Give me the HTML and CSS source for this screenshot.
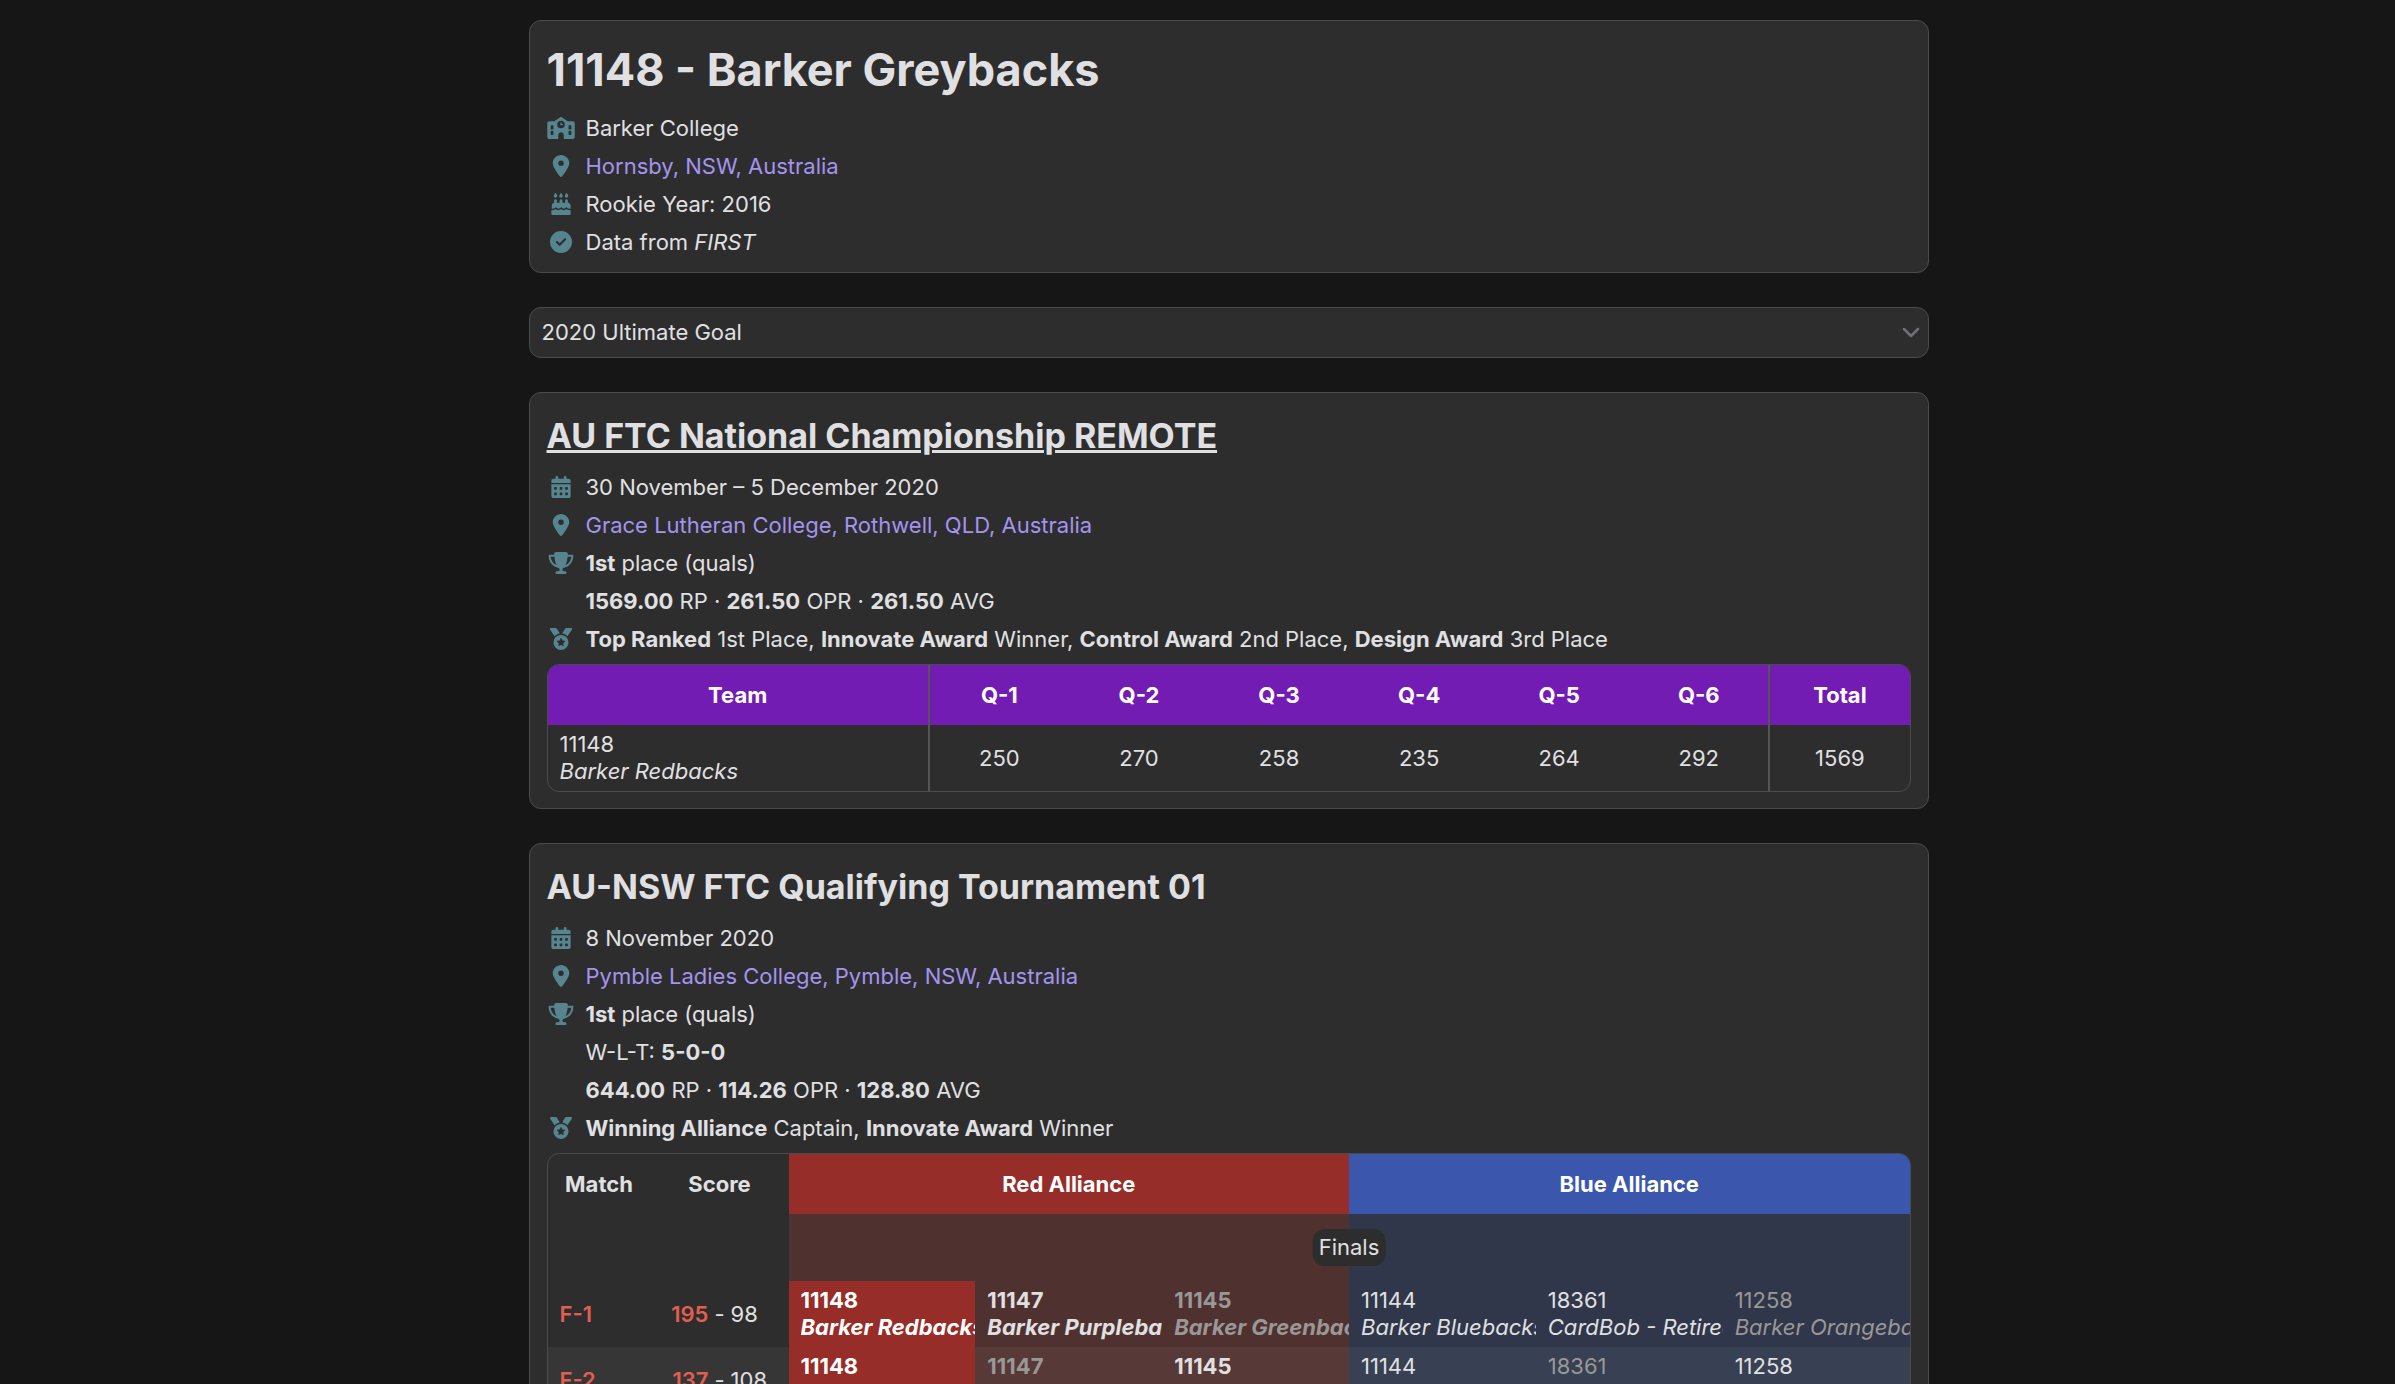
FILE: index.html
```html
<!DOCTYPE html>
<html lang="en">
<head>
    <meta charset="UTF-8">
    <meta name="viewport" content="width=device-width, initial-scale=1.0">
    <title>11148 - Barker Greybacks</title>
    <link rel="stylesheet" href="styles.css">
</head>
<body>
    <!-- Icon sprites -->
    <svg class="sprites" aria-hidden="true">
        <symbol id="school" viewBox="0 0 640 512"><path d="M337.8 5.4C327-1.8 313-1.8 302.2 5.4L166.3 96H48C21.5 96 0 117.5 0 144V464c0 26.5 21.5 48 48 48H256V416c0-35.3 28.7-64 64-64s64 28.7 64 64v96H592c26.5 0 48-21.5 48-48V144c0-26.5-21.5-48-48-48H473.7L337.8 5.4zM96 192h32c8.8 0 16 7.2 16 16v64c0 8.8-7.2 16-16 16H96c-8.8 0-16-7.2-16-16V208c0-8.8 7.2-16 16-16zm400 16c0-8.8 7.2-16 16-16h32c8.8 0 16 7.2 16 16v64c0 8.8-7.2 16-16 16H512c-8.8 0-16-7.2-16-16V208zM96 320h32c8.8 0 16 7.2 16 16v64c0 8.8-7.2 16-16 16H96c-8.8 0-16-7.2-16-16V336c0-8.8 7.2-16 16-16zm400 16c0-8.8 7.2-16 16-16h32c8.8 0 16 7.2 16 16v64c0 8.8-7.2 16-16 16H512c-8.8 0-16-7.2-16-16V336zM232 176a88 88 0 1 1 176 0 88 88 0 1 1 -176 0zm88-48c-8.8 0-16 7.2-16 16v32c0 8.8 7.2 16 16 16h32c8.8 0 16-7.2 16-16s-7.2-16-16-16H336V144c0-8.8-7.2-16-16-16z"/></symbol>
        <symbol id="location" viewBox="0 0 384 512"><path d="M215.7 499.2C267 435 384 279.4 384 192C384 86 298 0 192 0S0 86 0 192c0 87.4 117 243 168.3 307.2c12.3 15.3 35.1 15.3 47.4 0zM192 128a64 64 0 1 1 0 128 64 64 0 1 1 0-128z"/></symbol>
        <symbol id="cake" viewBox="0 0 448 512">
            <path d="M86.4 5.5L61.8 47.6C58 54.1 56 61.6 56 69.2V72c0 22.1 17.9 40 40 40s40-17.9 40-40V69.2c0-7.6-2-15-5.8-21.6L105.6 5.5C103.6 2.1 100 0 96 0s-7.6 2.1-9.6 5.5z"/>
            <path d="M214.4 5.5L189.8 47.6C186 54.1 184 61.6 184 69.2V72c0 22.1 17.9 40 40 40s40-17.9 40-40V69.2c0-7.6-2-15-5.8-21.6L233.6 5.5C231.6 2.1 228 0 224 0s-7.6 2.1-9.6 5.5z"/>
            <path d="M342.4 5.5L317.8 47.6C314 54.1 312 61.6 312 69.2V72c0 22.1 17.9 40 40 40s40-17.9 40-40V69.2c0-7.6-2-15-5.8-21.6L361.6 5.5C359.6 2.1 356 0 352 0s-7.6 2.1-9.6 5.5z"/>
            <path d="M64 224V176a32 32 0 0 1 64 0v48h64V176a32 32 0 0 1 64 0v48h64V176a32 32 0 0 1 64 0v48c35 0 64 29 64 64v71c-9 5-18 9-29 9c-25 0-45-14-55-28c-8-8-18-8-25 0c-10 14-30 28-51 28s-38-14-48-28c-8-8-18-8-24 0c-10 14-28 28-48 28s-41-14-51-28c-7-8-17-8-24 0c-11 14-31 28-55 28c-11 0-20-4-29-9V288c0-35 29-64 64-64z"/>
            <path d="M0 480V394c9 4 18 6 29 6c27 0 50-13 66-27c14 14 36 27 61 27s50-13 68-27c16 14 40 27 65 27s48-13 64-27c16 14 39 27 66 27c11 0 20-2 29-6v86a32 32 0 0 1-32 32H32a32 32 0 0 1-32-32z"/>
        </symbol>
        <symbol id="check" viewBox="0 0 512 512"><path d="M256 512A256 256 0 1 0 256 0a256 256 0 1 0 0 512zM369 209L241 337c-9.4 9.4-24.6 9.4-33.9 0l-64-64c-9.4-9.4-9.4-24.6 0-33.9s24.6-9.4 33.9 0l47 47L335 175c9.4-9.4 24.6-9.4 33.9 0s9.4 24.6 0 33.9z"/></symbol>
        <symbol id="calendar" viewBox="0 0 448 512"><path d="M128 0c17.7 0 32 14.3 32 32V64H288V32c0-17.7 14.3-32 32-32s32 14.3 32 32V64h48c26.5 0 48 21.5 48 48v48H0V112C0 85.5 21.5 64 48 64H96V32c0-17.7 14.3-32 32-32zM0 192H448V464c0 26.5-21.5 48-48 48H48c-26.5 0-48-21.5-48-48V192zm64 80v32c0 8.8 7.2 16 16 16h32c8.8 0 16-7.2 16-16V272c0-8.8-7.2-16-16-16H80c-8.8 0-16 7.2-16 16zm128 0v32c0 8.8 7.2 16 16 16h32c8.8 0 16-7.2 16-16V272c0-8.8-7.2-16-16-16H208c-8.8 0-16 7.2-16 16zm144-16c-8.8 0-16 7.2-16 16v32c0 8.8 7.2 16 16 16h32c8.8 0 16-7.2 16-16V272c0-8.8-7.2-16-16-16H336zM64 400v32c0 8.8 7.2 16 16 16h32c8.8 0 16-7.2 16-16V400c0-8.8-7.2-16-16-16H80c-8.8 0-16 7.2-16 16zm144-16c-8.8 0-16 7.2-16 16v32c0 8.8 7.2 16 16 16h32c8.8 0 16-7.2 16-16V400c0-8.8-7.2-16-16-16H208zm112 16v32c0 8.8 7.2 16 16 16h32c8.8 0 16-7.2 16-16V400c0-8.8-7.2-16-16-16H336c-8.8 0-16 7.2-16 16z"/></symbol>
        <symbol id="trophy" viewBox="0 0 576 512"><path d="M400 0H176c-26.5 0-48.1 21.8-47.1 48.2c.2 5.3 .4 10.6 .7 15.8H24C10.7 64 0 74.7 0 88c0 92.6 33.5 157 78.5 200.7c44.3 43.1 98.3 64.8 138.1 75.8c23.4 6.5 39.4 26 39.4 45.6c0 20.9-17 37.9-37.9 37.9H192c-17.7 0-32 14.3-32 32s14.3 32 32 32H384c17.7 0 32-14.3 32-32s-14.3-32-32-32H357.9C337 448 320 431 320 410.1c0-19.6 15.9-39.2 39.4-45.6c39.9-11 93.9-32.7 138.2-75.8C542.5 245 576 180.6 576 88c0-13.3-10.7-24-24-24H446.4c.3-5.2 .5-10.4 .7-15.8C448.1 21.8 426.5 0 400 0zM48.9 112h84.4c9.1 90.1 29.2 150.3 51.9 190.6c-24.9-11-50.8-26.5-73.2-48.3c-32-31.1-58-76-63-142.3zM464.1 254.3c-22.4 21.8-48.3 37.3-73.2 48.3c22.7-40.3 42.8-100.5 51.9-190.6h84.4c-5.1 66.3-31.1 111.2-63 142.3z"/></symbol>
        <symbol id="medal" viewBox="0 0 512 512"><path d="M4.1 38.2C1.4 34.2 0 29.4 0 24.6C0 11 11 0 24.6 0H133.9c11.2 0 21.7 5.9 27.4 15.5l68.5 114.1c-48.2 6.1-91.3 28.6-123.4 61.9L4.1 38.2zm503.7 0L405.6 191.5c-32.1-33.3-75.2-55.8-123.4-61.9L350.7 15.5C356.5 5.9 366.9 0 378.1 0H487.4C501 0 512 11 512 24.6c0 4.8-1.4 9.6-4.1 13.6zM80 336a176 176 0 1 1 352 0A176 176 0 1 1 80 336zm184.4-94.9c-3.4-7-13.3-7-16.8 0l-22.4 45.4c-1.4 2.8-4 4.7-7 5.1L168 298.9c-7.7 1.1-10.7 10.5-5.2 16l36.3 35.4c2.2 2.2 3.2 5.2 2.7 8.3l-8.6 49.9c-1.3 7.6 6.7 13.5 13.6 9.9l44.8-23.6c2.7-1.4 6-1.4 8.7 0l44.8 23.6c6.9 3.6 14.9-2.2 13.6-9.9l-8.6-49.9c-.5-3 .5-6.1 2.7-8.3l36.3-35.4c5.6-5.4 2.5-14.8-5.2-16l-50.1-7.3c-3-.4-5.7-2.4-7-5.1l-22.4-45.4z"/></symbol>
    </svg>

    <main class="page">
        <!-- Team info -->
        <section class="card">
            <h1>11148 - Barker Greybacks</h1>
            <div class="info"><svg class="icon"><use href="#school"/></svg><span>Barker College</span></div>
            <div class="info"><svg class="icon"><use href="#location"/></svg><a href="#">Hornsby, NSW, Australia</a></div>
            <div class="info"><svg class="icon"><use href="#cake"/></svg><span>Rookie Year: 2016</span></div>
            <div class="info"><svg class="icon"><use href="#check"/></svg><span>Data from <em>FIRST</em></span></div>
        </section>

        <div class="season">
            <select aria-label="Season">
                <option>2020 Ultimate Goal</option>
            </select>
            <svg class="chevron" viewBox="0 0 18 12"><path d="M2 2l7 7 7-7"/></svg>
        </div>

        <!-- Remote event -->
        <section class="card event">
            <h2><a href="#" class="hovered">AU FTC National Championship REMOTE</a></h2>
            <div class="info"><svg class="icon"><use href="#calendar"/></svg><span>30 November – 5 December 2020</span></div>
            <div class="info"><svg class="icon"><use href="#location"/></svg><a href="#">Grace Lutheran College, Rothwell, QLD, Australia</a></div>
            <div class="info"><svg class="icon"><use href="#trophy"/></svg><span><b>1st</b> place (quals)</span></div>
            <div class="info no-icon"><span><b>1569.00</b> RP · <b>261.50</b> OPR · <b>261.50</b> AVG</span></div>
            <div class="info"><svg class="icon"><use href="#medal"/></svg><span><b>Top Ranked</b> 1st Place, <b>Innovate Award</b> Winner, <b>Control Award</b> 2nd Place, <b>Design Award</b> 3rd Place</span></div>
            <div class="table-wrap">
                <table class="remote">
                    <thead>
                        <tr>
                            <th class="team-col">Team</th>
                            <th>Q-1</th>
                            <th>Q-2</th>
                            <th>Q-3</th>
                            <th>Q-4</th>
                            <th>Q-5</th>
                            <th>Q-6</th>
                            <th class="total">Total</th>
                        </tr>
                    </thead>
                    <tbody>
                        <tr>
                            <td class="team">11148<em>Barker Redbacks</em></td>
                            <td>250</td>
                            <td>270</td>
                            <td>258</td>
                            <td>235</td>
                            <td>264</td>
                            <td>292</td>
                            <td class="total">1569</td>
                        </tr>
                    </tbody>
                </table>
            </div>
        </section>

        <!-- Traditional event -->
        <section class="card event">
            <h2><a href="#">AU-NSW FTC Qualifying Tournament 01</a></h2>
            <div class="info"><svg class="icon"><use href="#calendar"/></svg><span>8 November 2020</span></div>
            <div class="info"><svg class="icon"><use href="#location"/></svg><a href="#">Pymble Ladies College, Pymble, NSW, Australia</a></div>
            <div class="info"><svg class="icon"><use href="#trophy"/></svg><span><b>1st</b> place (quals)</span></div>
            <div class="info no-icon"><span>W-L-T: <b>5-0-0</b></span></div>
            <div class="info no-icon"><span><b>644.00</b> RP · <b>114.26</b> OPR · <b>128.80</b> AVG</span></div>
            <div class="info"><svg class="icon"><use href="#medal"/></svg><span><b>Winning Alliance</b> Captain, <b>Innovate Award</b> Winner</span></div>
            <div class="table-wrap">
                <table class="matches">
                    <colgroup>
                        <col class="match-col">
                        <col class="score-col">
                        <col span="6">
                    </colgroup>
                    <thead>
                        <tr>
                            <th>Match</th>
                            <th>Score</th>
                            <th class="red" colspan="3">Red Alliance</th>
                            <th class="blue" colspan="3">Blue Alliance</th>
                        </tr>
                    </thead>
                    <tbody>
                        <tr class="level">
                            <td colspan="2"></td>
                            <td class="red-bg" colspan="3"></td>
                            <td class="blue-bg" colspan="3"><span class="level-name">Finals</span></td>
                        </tr>
                        <tr>
                            <td class="match">F-1</td>
                            <td><div class="score"><b>195</b><span>-</span><span>98</span></div></td>
                            <td class="team red win">11148<em>Barker Redbacks</em></td>
                            <td class="team red-bg win">11147<em>Barker Purplebacks</em></td>
                            <td class="team red-bg win out">11145<em>Barker Greenbacks</em></td>
                            <td class="team blue-bg">11144<em>Barker Bluebacks</em></td>
                            <td class="team blue-bg">18361<em>CardBob - Retired</em></td>
                            <td class="team blue-bg out">11258<em>Barker Orangebacks</em></td>
                        </tr>
                        <tr class="stripe">
                            <td class="match">F-2</td>
                            <td><div class="score"><b>137</b><span>-</span><span>108</span></div></td>
                            <td class="team red win">11148<em>Barker Redbacks</em></td>
                            <td class="team red-bg win out">11147<em>Barker Purplebacks</em></td>
                            <td class="team red-bg win">11145<em>Barker Greenbacks</em></td>
                            <td class="team blue-bg">11144<em>Barker Bluebacks</em></td>
                            <td class="team blue-bg out">18361<em>CardBob - Retired</em></td>
                            <td class="team blue-bg">11258<em>Barker Orangebacks</em></td>
                        </tr>
                    </tbody>
                </table>
            </div>
        </section>
    </main>
</body>
</html>
```
FILE: styles.css
```css
:root {
    --bg: #161616;
    --card: #2d2d2d;
    --line: #4b4b4b;
    --text: #e0e0e2;
    --link: #a394ee;
    --icon: #568590;
    --red: #972d28;
    --blue: #3b56ad;
}

* {
    box-sizing: border-box;
}

body {
    margin: 0;
    padding-left: 62px;
    background: var(--bg);
    color: var(--text);
    font-family: Inter, "Liberation Sans", sans-serif;
    font-size: 22px;
    line-height: 27px;
}

.sprites {
    display: none;
}

.page {
    display: flex;
    flex-direction: column;
    gap: 34px;
    max-width: 1400px;
    margin: 0 auto;
    padding: 20px 0;
}

.card {
    background: var(--card);
    border: 1px solid var(--line);
    border-radius: 12px;
    padding: 12px 17px 11px;
}

.event {
    padding-bottom: 16px;
}

h1 {
    margin: 0 0 2px;
    font-size: 45px;
    line-height: 74px;
}

h2 {
    margin: 0 0 2px;
    font-size: 34px;
    line-height: 61px;
}

h2 a {
    color: inherit;
    text-decoration: none;
}

h2 a:hover,
h2 .hovered {
    text-decoration: underline;
    text-decoration-thickness: 3px;
}

b {
    font-weight: 700;
}

/* Icon + text lines */
.info {
    display: flex;
    align-items: center;
    gap: 11px;
    line-height: 38px;
}

.info a {
    color: var(--link);
    text-decoration: none;
}

.icon {
    width: 28px;
    height: 22px;
    fill: var(--icon);
}

.no-icon {
    padding-left: 39px;
}

/* Season picker */
.season {
    position: relative;
    display: flex;
}

.season select {
    flex: 1;
    height: 51px;
    padding: 0 12px;
    appearance: none;
    background: var(--card);
    border: 1px solid var(--line);
    border-radius: 12px;
    color: inherit;
    font: inherit;
}

.chevron {
    position: absolute;
    right: 9px;
    top: 20px;
    width: 18px;
    height: 12px;
    fill: none;
    stroke: #717175;
    stroke-width: 2.5;
    stroke-linecap: round;
    stroke-linejoin: round;
    pointer-events: none;
}

/* Tables */
.table-wrap {
    margin-top: 6px;
    border: 1px solid var(--line);
    border-radius: 12px;
    overflow: hidden;
}

table {
    width: 100%;
    table-layout: fixed;
    border-collapse: collapse;
}

th {
    height: 60px;
    padding: 0;
    font-weight: 700;
}

td {
    height: 66px;
    padding: 0;
    text-align: center;
}

.team {
    padding: 6px 0 6px 12px;
    text-align: left;
    white-space: nowrap;
    overflow: hidden;
}

.team em {
    display: block;
    overflow: hidden;
}

.remote th {
    background: #721cb4;
    color: white;
}

.remote .team-col {
    width: 28%;
}

.remote th:first-child,
.remote td:first-child {
    border-right: 2px solid #555;
}

.remote .total {
    border-left: 2px solid #555;
}

.match-col {
    width: 103px;
}

.score-col {
    width: 138px;
}

.red {
    background: var(--red);
    color: white;
}

.blue {
    background: var(--blue);
    color: white;
}

.red-bg {
    background: #4f3130;
}

.blue-bg {
    background: #30374a;
}

.stripe {
    background: #363636;
}

.stripe .red-bg {
    background: #573937;
}

.stripe .blue-bg {
    background: #384053;
}

.win {
    font-weight: 700;
}

.out {
    color: #9a9797;
}

.match {
    padding-left: 12px;
    text-align: left;
    color: #e05f50;
    font-weight: 600;
}

.score {
    display: grid;
    grid-template-columns: 1fr auto 1fr;
    gap: 6px;
    text-align: left;
}

.score b {
    color: #e05f50;
    font-weight: 600;
    text-align: right;
}

/* Round label centred on the line between both alliances */
.level td {
    height: 67px;
}

.level .blue-bg {
    position: relative;
}

.level-name {
    position: absolute;
    left: 0;
    top: 15px;
    transform: translateX(-50%);
    padding: 5px 6px;
    background: var(--card);
    border-radius: 12px;
}
```
